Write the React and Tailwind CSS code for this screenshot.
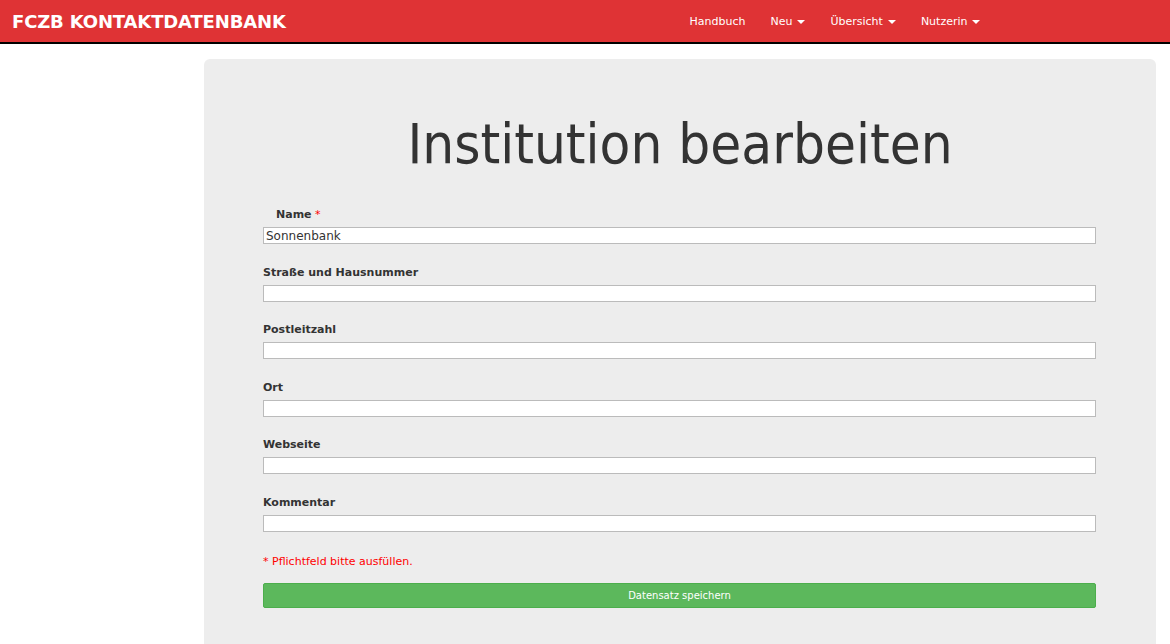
import React from "react";

const FIELDS = [
  { label: "Name", required: true, value: "Sonnenbank" },
  { label: "Straße und Hausnummer" },
  { label: "Postleitzahl" },
  { label: "Ort" },
  { label: "Webseite" },
  { label: "Kommentar" },
];

const NAV = [
  { title: "Handbuch" },
  { title: "Neu", caret: true },
  { title: "Übersicht", caret: true },
  { title: "Nutzerin", caret: true },
];

function Caret() {
  return <span className="inline-block ml-[5px] align-middle w-0 h-0 border-x-[4px] border-x-transparent border-t-[4px] border-t-white" />;
}

export default function App() {
  return (
    <div className="h-[644px] bg-white text-[#333] overflow-hidden" style={{ fontFamily: '"DejaVu Sans", Verdana, sans-serif' }}>
      <nav className="h-[44px] bg-[#df3335] border-b-2 border-black flex items-center">
        <div className="pl-[12px] text-white font-bold text-[18px] tracking-[-0.15px] w-[677px]">FCZB KONTAKTDATENBANK</div>
        <ul className="flex items-center text-white text-[11px] pt-[1px]">
          {NAV.map(n => (
            <li key={n.title} className="px-[12.5px] leading-none">
              {n.title}{n.caret && <Caret />}
            </li>
          ))}
        </ul>
      </nav>
      <div className="pl-[204px] pr-[14px] pt-[15px]">
        <div className="bg-[#ededed] rounded-[6px] pt-[53px] pb-[40px] min-h-[620px]">
          <h1
            className="text-center text-[56px] leading-[64px] text-[#333] mb-[32px]"
            style={{ fontFamily: '"DejaVu Sans Condensed", "DejaVu Sans", Verdana, sans-serif' }}
          >
            Institution bearbeiten
          </h1>
          <form className="ml-[59px] mr-[60px] flex flex-col">
            {FIELDS.map(f => (
              <div key={f.label} className="mb-[21.6px]">
                <label className={`block text-[11px] font-bold leading-[14px] mb-[5px] ${f.required ? "pl-[13px]" : ""}`}>
                  {f.label}{f.required && <span className="text-[#f00] font-normal"> *</span>}
                </label>
                <input
                  defaultValue={f.value || ""}
                  className="block w-full h-[17px] bg-white border border-[#bbb] text-[12px] px-[2px] leading-none outline-none"
                  style={{ fontFamily: '"DejaVu Sans", Verdana, sans-serif' }}
                />
              </div>
            ))}
            <p className="text-[#f00] text-[11px] leading-[14px] mt-[1px] mb-[14px]">* Pflichtfeld bitte ausfüllen.</p>
            <button type="button" className="h-[25px] w-full bg-[#5cb85c] border border-[#4cae4c] rounded-[2px] text-white text-[10px]">
              Datensatz speichern
            </button>
          </form>
        </div>
      </div>
    </div>
  );
}
